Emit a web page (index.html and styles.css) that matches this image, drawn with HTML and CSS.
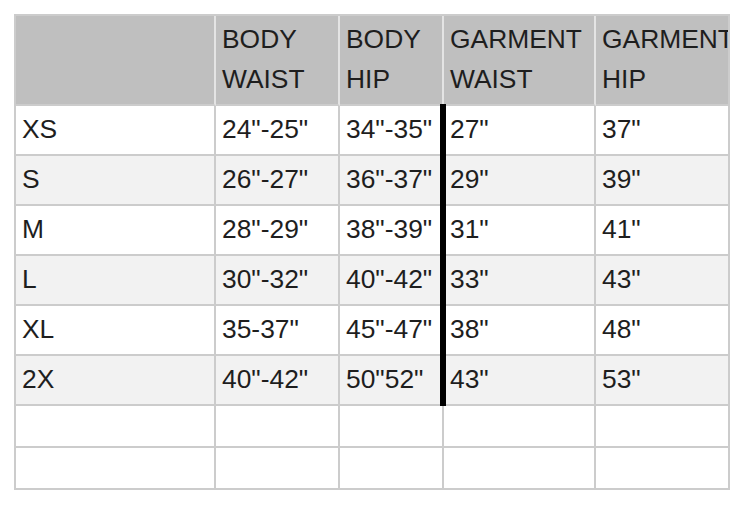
FILE: index.html
```
<!DOCTYPE html>
<html>
<head>
<meta charset="utf-8">
<link rel="stylesheet" href="styles.css">
</head>
<body>
<div class="wrap">
<table class="size">
<thead>
<tr>
<th class="c1"></th>
<th class="c2">BODY<br>WAIST</th>
<th class="c3">BODY<br>HIP</th>
<th class="c4">GARMENT<br>WAIST</th>
<th class="c5">GARMENT<br>HIP</th>
</tr>
</thead>
<tbody>
<tr><td>XS</td><td>24"-25"</td><td>34"-35"</td><td class="gw">27"</td><td>37"</td></tr>
<tr class="alt"><td>S</td><td>26"-27"</td><td>36"-37"</td><td class="gw">29"</td><td>39"</td></tr>
<tr><td>M</td><td>28"-29"</td><td>38"-39"</td><td class="gw">31"</td><td>41"</td></tr>
<tr class="alt"><td>L</td><td>30"-32"</td><td>40"-42"</td><td class="gw">33"</td><td>43"</td></tr>
<tr><td>XL</td><td>35-37"</td><td>45"-47"</td><td class="gw">38"</td><td>48"</td></tr>
<tr class="alt"><td>2X</td><td>40"-42"</td><td>50"52"</td><td class="gw">43"</td><td>53"</td></tr>
<tr class="empty"><td></td><td></td><td></td><td></td><td></td></tr>
<tr class="empty"><td></td><td></td><td></td><td></td><td></td></tr>
</tbody>
</table>
</div>
</body>
</html>
```
FILE: styles.css
```
html, body {
  margin: 0;
  padding: 0;
  background: #ffffff;
}
.wrap {
  padding: 14px;
}
.size {
  table-layout: fixed;
  border-collapse: separate;
  border-spacing: 0;
  width: 716px;
  border-top: 2px solid #cccccc;
  border-left: 2px solid #cccccc;
  font-family: "Liberation Sans", Arial, sans-serif;
  font-size: 26.4px;
  line-height: 40px;
  color: #1e1e1e;
}
.size th,
.size td {
  box-sizing: border-box;
  padding: 3px 6px 5px 6px;
  text-align: left;
  font-weight: normal;
  vertical-align: middle;
  white-space: nowrap;
  overflow: hidden;
  border-right: 2px solid #cccccc;
  border-bottom: 2px solid #cccccc;
}
.size th {
  background: #bfbfbf;
  height: 90px;
  border-right-color: #e4e4e4;
}
.size th.c5 {
  border-right-color: #cccccc;
}
.c1 { width: 200px; }
.c2 { width: 124px; }
.c3 { width: 104px; }
.c4 { width: 152px; }
.c5 { width: 134px; }
.size td {
  height: 50px;
}
.size tr.alt td {
  background: #f2f2f2;
}
.size tr.empty td {
  height: 42px;
}
.size td.gw {
  position: relative;
  overflow: visible;
}
.size td.gw::before {
  content: "";
  position: absolute;
  left: -4px;
  width: 6px;
  top: -2px;
  bottom: -2px;
  background: #000000;
}
```
